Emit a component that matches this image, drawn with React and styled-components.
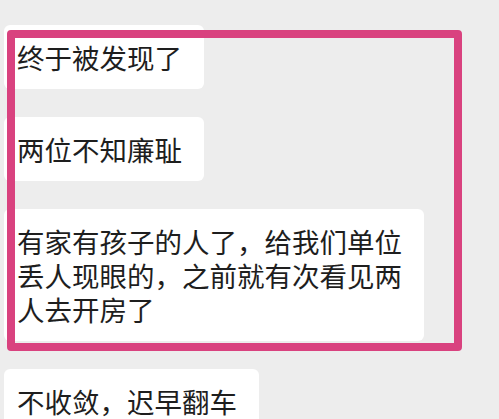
import React from "react";
import styled, { createGlobalStyle } from "styled-components";

const GlobalStyle = createGlobalStyle`
  html, body {
    margin: 0;
    padding: 0;
    background: #ededed;
    overflow: hidden;
  }
`;

const Chat = styled.div`
  position: relative;
  display: flex;
  flex-direction: column;
  align-items: flex-start;
  gap: 28px;
  padding: 25px 0 0 4px;
  height: 419px;
  box-sizing: border-box;
  font-family: "Noto Sans CJK SC", "Noto Sans", sans-serif;
`;

const Bubble = styled.div`
  background: #ffffff;
  border-radius: 6px;
  padding: 15px 22px 15px 13px;
  font-size: 27.5px;
  line-height: 34px;
  color: #1e1e1e;
  white-space: pre-line;
  flex-shrink: 0;
`;

const Highlight = styled.div`
  position: absolute;
  left: 7px;
  top: 30px;
  width: 455px;
  height: 321px;
  box-sizing: border-box;
  border: 8px solid #d9427f;
  border-radius: 4px;
  pointer-events: none;
`;

const messages = [
  "终于被发现了",
  "两位不知廉耻",
  "有家有孩子的人了，给我们单位\n丢人现眼的，之前就有次看见两\n人去开房了",
  "不收敛，迟早翻车",
];

export default function App() {
  return (
    <>
      <GlobalStyle />
      <Chat>
        {messages.map((m, i) => (
          <Bubble key={i}>{m}</Bubble>
        ))}
        <Highlight />
      </Chat>
    </>
  );
}
